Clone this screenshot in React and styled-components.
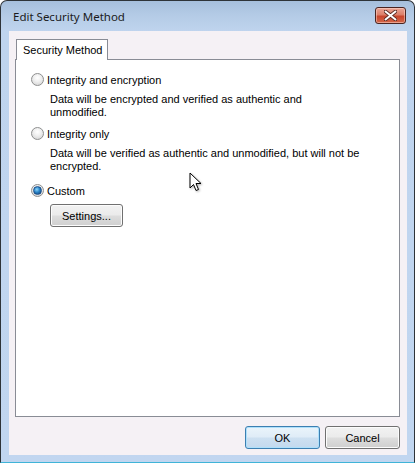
import React from "react";
import styled, { createGlobalStyle } from "styled-components";

const GlobalStyle = createGlobalStyle`
  html, body { margin: 0; padding: 0; background: #ffffff; }
  * { box-sizing: border-box; }
`;

const Window = styled.div`
  width: 415px;
  height: 463px;
  display: flex;
  flex-direction: column;
  border: 1px solid #2e3338;
  border-bottom-color: #3fb4d8;
  border-radius: 7px 7px 0 0;
  background: linear-gradient(#a6bfdc 0px, #b4cbe6 14px, #bfd4ee 30px, #c1d6f0 100%);
  overflow: hidden;
  position: relative;
`;

const TitleBar = styled.div`
  height: 30px;
  flex: none;
  display: flex;
  align-items: center;
  justify-content: space-between;
  padding: 0 8px 0 12px;
`;

const Title = styled.span`
  font-family: "Noto Sans", "Open Sans", sans-serif;
  font-size: 11.5px;
  color: #1b1b1b;
`;

const CloseButton = styled.div`
  width: 31px;
  height: 17px;
  margin-top: -1px;
  border: 1px solid #4a2420;
  border-radius: 3px;
  background: linear-gradient(#eaa595 0%, #dc7f69 45%, #c8452c 55%, #d2684a 100%);
  box-shadow: inset 0 0 0 1px rgba(255, 220, 210, 0.5);
  display: flex;
  align-items: center;
  justify-content: center;
`;

const Client = styled.div`
  flex: 1;
  margin: 0 7px 7px 8px;
  background: #f5f1f5;
  display: flex;
  flex-direction: column;
  padding: 8px 7px 6px 6px;
`;

const TabStrip = styled.div`
  display: flex;
  height: 20px;
  padding-left: 1px;
`;

const Tab = styled.div`
  width: 92px;
  height: 21px;
  border: 1px solid #898c95;
  border-bottom: none;
  background: #ffffff;
  font-family: "Liberation Sans", Arial, sans-serif;
  font-size: 11px;
  color: #000;
  padding: 4px 0 0 6px;
  position: relative;
  z-index: 1;
`;

const Panel = styled.div`
  height: 358px;
  border: 1px solid #898c95;
  background: #ffffff;
  padding: 13px 0 0 15px;
  font-family: "Liberation Sans", Arial, sans-serif;
  font-size: 11px;
  color: #000;
`;

const Option = styled.div`
  margin-top: ${(p) => p.$gap || 0}px;
`;

const RadioRow = styled.label`
  display: flex;
  align-items: center;
  height: 13px;
  gap: 3px;
`;

const RadioDot = styled.span`
  width: 13px;
  height: 13px;
  border-radius: 50%;
  border: 1px solid #8e8f8f;
  background: radial-gradient(circle at 50% 35%, #ffffff 0%, #f0f0f0 40%, #cfcfcf 100%);
  display: flex;
  align-items: center;
  justify-content: center;
  flex: none;
  &::after {
    content: "";
    width: 7px;
    height: 7px;
    border-radius: 50%;
    display: ${(p) => (p.$checked ? "block" : "none")};
    background: radial-gradient(circle at 40% 35%, #8fd6fb 0%, #2a85c8 45%, #0d3a6e 100%);
    border: 1px solid #1d4f8a;
  }
`;

const Description = styled.p`
  margin: 7px 0 0 19px;
  line-height: 13px;
`;

const Line = styled.span`
  display: block;
  white-space: nowrap;
`;

const Button = styled.div`
  width: ${(p) => p.$w || 75}px;
  height: 23px;
  border: 1px solid ${(p) => (p.$default ? "#3c7fb1" : "#707070")};
  border-radius: 3px;
  background: ${(p) =>
    p.$default
      ? "linear-gradient(#eaf4fb 0%, #dfecf7 48%, #cde0f1 52%, #c3d9ee 100%)"
      : "linear-gradient(#f2f2f2 0%, #ebebeb 48%, #dddddd 52%, #cfcfcf 100%)"};
  box-shadow: inset 0 0 0 1px ${(p) => (p.$default ? "#aee0fb" : "#fcfcfc")};
  display: flex;
  align-items: center;
  justify-content: center;
  font-family: "Liberation Sans", Arial, sans-serif;
  font-size: 11px;
  color: #000;
`;

const SettingsButton = styled(Button)`
  margin: 7px 0 0 19px;
`;

const Footer = styled.div`
  display: flex;
  justify-content: flex-end;
  gap: 5px;
  margin-top: 9px;
`;

const Cursor = styled.svg`
  position: absolute;
  left: 188px;
  top: 171px;
  filter: drop-shadow(1px 1px 1px rgba(0, 0, 0, 0.3));
`;

function CloseX() {
  return (
    <svg width="13" height="11" viewBox="0 0 13 11">
      <path
        d="M1.5 1.5 L11.5 9.5 M11.5 1.5 L1.5 9.5"
        stroke="#5a2a22"
        strokeWidth="3.6"
        strokeLinecap="round"
      />
      <path
        d="M1.5 1.5 L11.5 9.5 M11.5 1.5 L1.5 9.5"
        stroke="#ffffff"
        strokeWidth="2"
        strokeLinecap="round"
      />
    </svg>
  );
}

const options = [
  {
    label: "Integrity and encryption",
    lines: ["Data will be encrypted and verified as authentic and", "unmodified."],
    gap: 0,
  },
  {
    label: "Integrity only",
    lines: ["Data will be verified as authentic and unmodified, but will not be", "encrypted."],
    gap: 8,
  },
];

export default function App() {
  return (
    <>
      <GlobalStyle />
      <Window>
        <TitleBar>
          <Title>Edit Security Method</Title>
          <CloseButton>
            <CloseX />
          </CloseButton>
        </TitleBar>
        <Client>
          <TabStrip>
            <Tab>Security Method</Tab>
          </TabStrip>
          <Panel>
            {options.map((o) => (
              <Option key={o.label} $gap={o.gap}>
                <RadioRow>
                  <RadioDot />
                  {o.label}
                </RadioRow>
                <Description>
                  {o.lines.map((l) => (
                    <Line key={l}>{l}</Line>
                  ))}
                </Description>
              </Option>
            ))}
            <Option $gap={11}>
              <RadioRow>
                <RadioDot $checked />
                Custom
              </RadioRow>
              <SettingsButton $w={73}>Settings...</SettingsButton>
            </Option>
          </Panel>
          <Footer>
            <Button $default>OK</Button>
            <Button>Cancel</Button>
          </Footer>
        </Client>
        <Cursor width="14" height="22" viewBox="0 0 14 22">
          <path
            d="M1 1 L1 16 L4.5 12.5 L7 18.5 L9.5 17.5 L7 11.5 L12 11.5 Z"
            fill="#ffffff"
            stroke="#000000"
            strokeWidth="1"
            strokeLinejoin="miter"
          />
        </Cursor>
      </Window>
    </>
  );
}
